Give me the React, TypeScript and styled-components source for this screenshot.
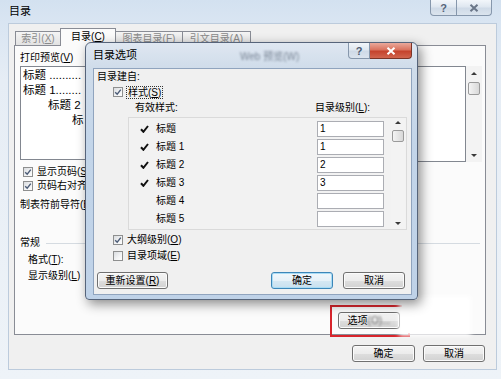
import styled, { createGlobalStyle } from 'styled-components';

const GlobalStyle = createGlobalStyle`
  html, body {
    margin: 0;
    padding: 0;
    background: #fff;
  }
  body {
    font-family: "Liberation Sans", "Noto Sans CJK SC", sans-serif;
    font-size: 10px;
    color: #000;
  }
  * {
    box-sizing: border-box;
  }
`;

type Tone = 'plain' | 'red';

const levels = [
  { name: '标题', level: '1', on: true },
  { name: '标题 1', level: '1', on: true },
  { name: '标题 2', level: '2', on: true },
  { name: '标题 3', level: '3', on: true },
  { name: '标题 4', level: '', on: false },
  { name: '标题 5', level: '', on: false },
];

const CheckBox = ({ checked }: { checked?: boolean }) => (
  <Box>
    {checked && (
      <svg width="8" height="8" viewBox="0 0 8 8">
        <path d="M1.2 4.2 L3.2 6.2 L6.8 1.6" fill="none" stroke="#4b5b76" strokeWidth="1.4" />
      </svg>
    )}
  </Box>
);

const Tick = () => (
  <svg width="9" height="8" viewBox="0 0 9 8">
    <path d="M1 4.2 L3.4 6.8 L8 1" fill="none" stroke="#111" strokeWidth="2" />
  </svg>
);

const CloseGlyph = ({ color }: { color: string }) => (
  <svg width="10" height="8" viewBox="0 0 10 8">
    <path d="M1.5 0.8 L8.5 7.2 M8.5 0.8 L1.5 7.2" stroke={color} strokeWidth="2" />
  </svg>
);

const App = () => {
  return (
    <>
      <GlobalStyle />
      <Window>
        <TitleBar>
          <TitleText>目录</TitleText>
          <CaptionGroup $right={9}>
            <CaptionButton $w={27} $tone="plain">
              <HelpGlyph $color="#56647a">?</HelpGlyph>
            </CaptionButton>
            <CaptionButton $w={35} $tone="plain">
              <CloseGlyph color="#6a7688" />
            </CaptionButton>
          </CaptionGroup>
        </TitleBar>

        <Client>
          <TabStrip>
            <Tab $w={46}>索引(<u>X</u>)</Tab>
            <Tab $w={56} $active>
              目录(<u>C</u>)
            </Tab>
            <Tab $w={68}>图表目录(<u>F</u>)</Tab>
            <Tab $w={69}>引文目录(<u>A</u>)</Tab>
          </TabStrip>

          <TabPanel>
            <TopGrid>
              <Column>
                <Label>
                  打印预览(<u>V</u>)
                </Label>
                <PreviewBox>
                  <PreviewLine $indent={0}>标题 ..........</PreviewLine>
                  <PreviewLine $indent={0}>标题 1........</PreviewLine>
                  <PreviewLine $indent={25}>标题 2</PreviewLine>
                  <PreviewLine $indent={49}>标</PreviewLine>
                </PreviewBox>
                <CheckRow $top={5}>
                  <CheckBox checked />
                  <span>
                    显示页码(<u>S</u>)
                  </span>
                </CheckRow>
                <CheckRow>
                  <CheckBox checked />
                  <span>
                    页码右对齐(<u>R</u>)
                  </span>
                </CheckRow>
                <FieldLabel $indent={0} $top={5}>
                  制表符前导符(<u>B</u>):
                </FieldLabel>
              </Column>
              <Column>
                <Label />
                <WebPreview>
                  <WebBox />
                  <ScrollBar $w={16}>
                    <Arrow $dir="up" $top={6} />
                    <Thumb $h={13} $top={7} />
                    <Arrow $dir="down" $bottom={5} />
                  </ScrollBar>
                </WebPreview>
              </Column>
            </TopGrid>

            <GroupHeader>常规</GroupHeader>
            <FieldLabel $indent={8} $top={3}>
              格式(<u>T</u>):
            </FieldLabel>
            <FieldLabel $indent={8} $top={2}>
              显示级别(<u>L</u>)
            </FieldLabel>

            <PanelFooter>
              <Button $w={62}>
                选项<Smudge>(O)...</Smudge>
              </Button>
            </PanelFooter>
          </TabPanel>

          <BottomButtons>
            <Button $w={63}>确定</Button>
            <Button $w={62}>取消</Button>
          </BottomButtons>
        </Client>

        <Highlight />
        <WhiteOut />

        <Dialog>
          <DialogTitleBar>
            <DialogTitle>目录选项</DialogTitle>
            <GhostText>Web 预览(W)</GhostText>
            <CaptionGroup $right={5}>
              <CaptionButton $w={22} $tone="plain">
                <HelpGlyph $color="#4d5b70">?</HelpGlyph>
              </CaptionButton>
              <CaptionButton $w={42} $tone="red">
                <CloseGlyph color="#fff" />
              </CaptionButton>
            </CaptionGroup>
          </DialogTitleBar>

          <DialogClient>
            <Label>目录建自:</Label>
            <CheckRow $top={3} $indent={16} $h={12}>
              <CheckBox checked />
              <FocusText>
                样式(<u>S</u>)
              </FocusText>
            </CheckRow>
            <HeaderRow>
              <HeaderCell $w={180}>有效样式:</HeaderCell>
              <HeaderCell>
                目录级别(<u>L</u>):
              </HeaderCell>
            </HeaderRow>
            <ListBox>
              <Rows>
                {levels.map((row) => (
                  <ListRow key={row.name}>
                    <TickCell>{row.on && <Tick />}</TickCell>
                    <RowLabel>{row.name}</RowLabel>
                    <LevelInput>{row.level}</LevelInput>
                  </ListRow>
                ))}
              </Rows>
              <ScrollBar $w={14}>
                <Arrow $dir="up" $top={1} />
                <Thumb $h={12} $top={6} />
                <Arrow $dir="down" $bottom={4} />
              </ScrollBar>
            </ListBox>
            <CheckRow $top={4} $indent={16} $h={12}>
              <CheckBox checked />
              <span>
                大纲级别(<u>O</u>)
              </span>
            </CheckRow>
            <CheckRow $top={4} $indent={16} $h={12}>
              <CheckBox />
              <span>
                目录项域(<u>E</u>)
              </span>
            </CheckRow>
            <DialogButtons>
              <Button $w={71}>
                重新设置(<u>R</u>)
              </Button>
              <Spacer />
              <Button $w={62} $primary>
                确定
              </Button>
              <Button $w={62}>取消</Button>
            </DialogButtons>
          </DialogClient>
        </Dialog>
      </Window>
    </>
  );
};

const Window = styled.div`
  position: relative;
  width: 501px;
  height: 379px;
  overflow: hidden;
  display: flex;
  flex-direction: column;
  background: linear-gradient(180deg, #d3e1f0 0px, #d9e5f2 22px, #e6edf5 80px, #eef3f8 100%);
`;

const TitleBar = styled.div`
  height: 23px;
  display: flex;
  justify-content: space-between;
  align-items: flex-start;
`;

const TitleText = styled.div`
  padding-left: 9px;
  line-height: 23px;
  font-size: 11px;
`;

const CaptionGroup = styled.div<{ $right: number }>`
  display: flex;
  margin-right: ${({ $right }) => $right}px;
`;

const CaptionButton = styled.div<{ $w: number; $tone: Tone }>`
  width: ${({ $w }) => $w}px;
  height: 16px;
  display: flex;
  align-items: center;
  justify-content: center;
  border: 1px solid ${({ $tone }) => ($tone === 'red' ? '#7b3427' : '#8697ac')};
  border-top: none;
  background: ${({ $tone }) =>
    $tone === 'red'
      ? 'linear-gradient(180deg, #eaa99b 0%, #d9735f 45%, #c5432d 55%, #d1654e 100%)'
      : 'linear-gradient(180deg, #f2f6fa 0%, #dfe7f0 45%, #cfdae7 55%, #dbe4ee 100%)'};

  & + & {
    border-left: none;
  }
  &:first-child {
    border-bottom-left-radius: 4px;
  }
  &:last-child {
    border-bottom-right-radius: 4px;
  }
`;

const HelpGlyph = styled.span<{ $color: string }>`
  font-size: 11px;
  font-weight: bold;
  line-height: 12px;
  color: ${({ $color }) => $color};
`;

const Client = styled.div`
  flex: 1;
  margin: 0 4px 9px 8px;
  background: #f0f0f0;
  border: 1px solid #bccbdc;
  padding: 4px 10px 0 5px;
  display: flex;
  flex-direction: column;
`;

const TabStrip = styled.div`
  position: relative;
  z-index: 1;
  height: 17px;
  display: flex;
  align-items: flex-end;
  padding-left: 2px;
`;

const Tab = styled.div<{ $w: number; $active?: boolean }>`
  width: ${({ $w }) => $w}px;
  height: ${({ $active }) => ($active ? 18 : 14)}px;
  margin-bottom: ${({ $active }) => ($active ? -1 : 0)}px;
  border: 1px solid #898c95;
  border-bottom: none;
  margin-left: -1px;
  background: ${({ $active }) => ($active ? '#fbfbfb' : 'linear-gradient(180deg, #f4f4f4, #e2e2e2)')};
  color: ${({ $active }) => ($active ? '#000' : '#8a8a8a')};
  line-height: ${({ $active }) => ($active ? 15 : 13)}px;
  text-align: center;
  white-space: nowrap;
`;

const TabPanel = styled.div`
  height: 290px;
  border: 1px solid #898c95;
  background: #fbfbfb;
  padding: 6px 3px 0 5px;
  display: flex;
  flex-direction: column;
`;

const TopGrid = styled.div`
  display: grid;
  grid-template-columns: 212px 1fr;
  column-gap: 8px;
`;

const Column = styled.div`
  display: flex;
  flex-direction: column;
`;

const Label = styled.div`
  line-height: 12px;
  height: 12px;
  white-space: nowrap;
`;

const PreviewBox = styled.div`
  margin-top: 2px;
  height: 94px;
  border: 1px solid #828790;
  background: #fff;
  padding: 1px 0 0 2px;
  overflow: hidden;
`;

const PreviewLine = styled.div<{ $indent: number }>`
  padding-left: ${({ $indent }) => $indent}px;
  font-size: 11.5px;
  line-height: 15px;
  white-space: nowrap;
`;

const CheckRow = styled.div<{ $top?: number; $indent?: number; $h?: number }>`
  display: flex;
  align-items: center;
  gap: 4px;
  height: ${({ $h }) => $h ?? 14}px;
  margin-top: ${({ $top }) => $top ?? 0}px;
  padding-left: ${({ $indent }) => $indent ?? 3}px;
  line-height: 12px;
  white-space: nowrap;
`;

const Box = styled.span`
  width: 10px;
  height: 10px;
  flex: none;
  display: flex;
  align-items: center;
  justify-content: center;
  border: 1px solid #8e8f8f;
  background: linear-gradient(135deg, #d9dcdf 0%, #f3f4f5 60%, #fdfdfd 100%);
`;

const FocusText = styled.span`
  outline: 1px dotted #333;
  padding: 0 1px;
  line-height: 11px;
`;

const FieldLabel = styled.div<{ $indent: number; $top: number }>`
  height: 14px;
  line-height: 14px;
  margin-top: ${({ $top }) => $top}px;
  padding-left: ${({ $indent }) => $indent}px;
  white-space: nowrap;
`;

const WebPreview = styled.div`
  margin-top: 2px;
  height: 96px;
  display: flex;
`;

const WebBox = styled.div`
  flex: 1;
  background: #fff;
  border: 1px solid #828790;
`;

const ScrollBar = styled.div<{ $w: number }>`
  width: ${({ $w }) => $w}px;
  flex: none;
  display: flex;
  flex-direction: column;
  align-items: center;
  background: #f3f3f3;
`;

const Arrow = styled.span<{ $dir: 'up' | 'down'; $top?: number; $bottom?: number }>`
  width: 0;
  height: 0;
  border-left: 3px solid transparent;
  border-right: 3px solid transparent;
  ${({ $dir }) => ($dir === 'up' ? 'border-bottom: 3px solid #3a3a3a;' : 'border-top: 3px solid #3a3a3a;')}
  margin-top: ${({ $top, $dir }) => ($dir === 'down' ? 'auto' : `${$top ?? 0}px`)};
  margin-bottom: ${({ $bottom }) => $bottom ?? 0}px;
`;

const Thumb = styled.span<{ $h: number; $top: number }>`
  width: 12px;
  height: ${({ $h }) => $h}px;
  margin-top: ${({ $top }) => $top}px;
  border: 1px solid #9a9a9a;
  border-radius: 2px;
  background: linear-gradient(90deg, #f4f4f4, #d8d8d8);
`;

const GroupHeader = styled.div`
  margin-top: 24px;
  height: 14px;
  line-height: 14px;
  display: flex;
  align-items: center;
  gap: 6px;

  &::after {
    content: '';
    flex: 1;
    margin-right: 2px;
    border-top: 1px solid #d5dbe1;
  }
`;

const PanelFooter = styled.div`
  display: flex;
  justify-content: flex-end;
  margin-top: 29px;
  padding-right: 82px;
`;

const Smudge = styled.span`
  color: #666;
  filter: blur(0.9px);
`;

const BottomButtons = styled.div`
  display: flex;
  justify-content: flex-end;
  gap: 8px;
  margin-top: 10px;
  padding-right: 1px;
`;

const Button = styled.button<{ $w: number; $primary?: boolean }>`
  width: ${({ $w }) => $w}px;
  height: 17px;
  padding: 0;
  flex: none;
  font: inherit;
  font-size: 10px;
  line-height: 14px;
  color: #000;
  white-space: nowrap;
  border-radius: 3px;
  border: 1px solid ${({ $primary }) => ($primary ? '#3d86b8' : '#707070')};
  background: ${({ $primary }) =>
    $primary
      ? 'linear-gradient(180deg, #f1f7fb 0%, #e7f1f8 50%, #d6e8f3 51%, #c9e0ef 100%)'
      : 'linear-gradient(180deg, #f4f4f4 0%, #ececec 50%, #dedede 51%, #d2d2d2 100%)'};
  box-shadow: ${({ $primary }) => ($primary ? 'inset 0 0 0 1px #a9dcf5' : 'inset 0 0 0 1px #fbfbfb')};
`;

const Highlight = styled.div`
  position: absolute;
  left: 330px;
  top: 305px;
  width: 80px;
  height: 32px;
  border: 2px solid #d8252c;
  z-index: 3;
`;

const WhiteOut = styled.div`
  position: absolute;
  left: 402px;
  top: 299px;
  width: 66px;
  height: 34px;
  background: #fff;
  box-shadow: 0 0 5px 3px #fff;
  z-index: 4;
`;

const Dialog = styled.div`
  position: absolute;
  left: 85px;
  top: 42px;
  width: 333px;
  height: 258px;
  z-index: 5;
  border: 1px solid #56647a;
  border-radius: 6px 6px 4px 4px;
  background: linear-gradient(180deg, #dfe7f1 0%, #cfdcea 10%, #c3d5e9 40%, #bfd2e8 100%);
  box-shadow: 3px 4px 12px rgba(0, 0, 0, 0.45);
  display: flex;
  flex-direction: column;
`;

const DialogTitleBar = styled.div`
  position: relative;
  height: 25px;
  display: flex;
  justify-content: space-between;
  align-items: flex-start;
  padding-left: 7px;
`;

const DialogTitle = styled.div`
  line-height: 25px;
  font-size: 11px;
`;

const GhostText = styled.span`
  position: absolute;
  left: 154px;
  top: 8px;
  font-size: 10px;
  line-height: 12px;
  color: rgba(40, 52, 72, 0.55);
  filter: blur(1.3px);
`;

const DialogClient = styled.div`
  flex: 1;
  margin: 0 5px 4px 7px;
  background: #f0f0f0;
  border: 1px solid #90a4be;
  padding: 2px 6px 0 3px;
  display: flex;
  flex-direction: column;
`;

const HeaderRow = styled.div`
  display: flex;
  margin-top: 4px;
  padding-left: 38px;
  height: 12px;
  line-height: 12px;
`;

const HeaderCell = styled.span<{ $w?: number }>`
  width: ${({ $w }) => ($w ? `${$w}px` : 'auto')};
  white-space: nowrap;
`;

const ListBox = styled.div`
  margin-top: 3px;
  margin-left: 31px;
  width: 279px;
  height: 113px;
  border: 1px solid #dadada;
  background: #f2f2f2;
  padding: 2px 1px 0 0;
  display: flex;
  gap: 2px;
`;

const Rows = styled.div`
  width: 260px;
  display: flex;
  flex-direction: column;
`;

const ListRow = styled.div`
  height: 18px;
  flex: none;
  display: flex;
  align-items: center;
  padding-left: 11px;
`;

const TickCell = styled.span`
  width: 16px;
  display: flex;
  align-items: center;
`;

const RowLabel = styled.span`
  width: 161px;
  line-height: 12px;
  white-space: nowrap;
`;

const LevelInput = styled.span`
  width: 67px;
  height: 16px;
  border: 1px solid #abadb3;
  background: #fff;
  padding-left: 2px;
  line-height: 14px;
`;

const DialogButtons = styled.div`
  display: flex;
  gap: 10px;
  margin-top: 10px;
`;

const Spacer = styled.span`
  flex: 1;
`;

export default App;
